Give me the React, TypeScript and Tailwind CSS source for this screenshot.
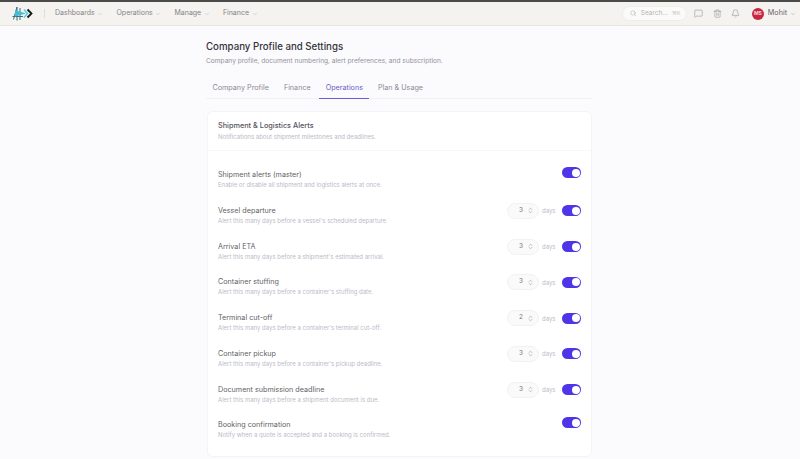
import { ChevronDown, Search, MessageSquare, Trash2, Bell, ChevronsUpDown } from "lucide-react";

const rows: { t: string; d: string; n?: number }[] = [
  { t: "Shipment alerts (master)", d: "Enable or disable all shipment and logistics alerts at once." },
  { t: "Vessel departure", d: "Alert this many days before a vessel's scheduled departure.", n: 3 },
  { t: "Arrival ETA", d: "Alert this many days before a shipment's estimated arrival.", n: 3 },
  { t: "Container stuffing", d: "Alert this many days before a container's stuffing date.", n: 3 },
  { t: "Terminal cut-off", d: "Alert this many days before a container's terminal cut-off.", n: 2 },
  { t: "Container pickup", d: "Alert this many days before a container's pickup deadline.", n: 3 },
  { t: "Document submission deadline", d: "Alert this many days before a shipment document is due.", n: 3 },
  { t: "Booking confirmation", d: "Notify when a quote is accepted and a booking is confirmed." },
];

function Toggle() {
  return (
    <div className="w-[19.500px] h-[11px] rounded-full bg-[#4f35e8] flex items-center justify-end pr-[1.500px]">
      <div className="w-[8px] h-[8px] rounded-full bg-white" />
    </div>
  );
}

function Logo() {
  return (
    <svg width="22" height="15" viewBox="0 0 22 15" fill="none">
      <path d="M1.500 13.500 L5 1 M5 1 L5 14.500 M8 2 L8 14 M0.500 10.500 H11" stroke="#3f6f78" strokeWidth="1" />
      <path d="M3 4 L14 7.500 L3 10.500 Z" fill="#3fc0d4" />
      <path d="M12 3.500 L15.500 7.500 L12 11.500" stroke="#4fd0e0" strokeWidth="1.500" />
      <path d="M15.500 3.500 L19.500 7.500 L15.500 11.500" stroke="#14151a" strokeWidth="1.800" />
    </svg>
  );
}

export default function App() {
  return (
    <div className="w-[800px] h-[459px] overflow-hidden bg-[#fbfbfd] font-['Inter',sans-serif] flex flex-col">
      <div className="h-[2px] bg-[#4a4a48] shrink-0" />
      <header className="h-[24px] shrink-0 bg-[#f5f3ef] border-b border-[#e8e6e1] flex items-center pl-[12px] pr-[4px]">
        <Logo />
        <div className="w-px h-[9px] bg-[#e0ddd8] ml-[10px] mr-[10px]" />
        <nav className="flex items-center gap-[13.200px] text-[7px] text-[#85838a]">
          {["Dashboards", "Operations", "Manage", "Finance"].map((n) => (
            <div key={n} className="flex items-center gap-[2.500px]">
              <span>{n}</span>
              <ChevronDown size={6} strokeWidth={1.500} className="text-[#a5a3a6]" />
            </div>
          ))}
        </nav>
        <div className="ml-auto flex items-center">
          <div className="w-[65px] h-[15px] rounded-full bg-[#fafaf8] border border-[#efede9] flex items-center pl-[7px] pr-[6px] text-[6.500px] text-[#b5b3b5]">
            <Search size={6.500} strokeWidth={1.500} className="text-[#98979a]" />
            <span className="ml-[4px]">Search...</span>
            <span className="ml-auto text-[5px] text-[#c5c3c5]">⌘K</span>
          </div>
          <MessageSquare size={9} strokeWidth={1.200} className="ml-[7px] text-[#77767a]" />
          <Trash2 size={9} strokeWidth={1.200} className="ml-[10px] text-[#77767a]" />
          <Bell size={9} strokeWidth={1.200} className="ml-[8.500px] text-[#77767a]" />
          <div className="ml-[12px] w-[12px] h-[12px] rounded-full bg-[#c8283f] flex items-center justify-center text-[5px] font-bold text-[#f5d5da]">
            MS
          </div>
          <span className="ml-[4px] text-[7.200px] text-[#66656a]">Mohit</span>
          <ChevronDown size={6} strokeWidth={1.500} className="ml-[3px] text-[#8f8e92]" />
        </div>
      </header>
      <main className="w-[386px] ml-[206px] pt-[14px]">
        <h1 className="text-[9.700px] leading-[14px] font-medium text-[#33333a]">Company Profile and Settings</h1>
        <p className="mt-[2px] text-[6.600px] leading-[10px] text-[#92929c]">
          Company profile, document numbering, alert preferences, and subscription.
        </p>
        <div className="mt-[14px] h-[19px] flex border-b border-[#f2f2f6] text-[7.200px] text-[#8a8a94]">
          <div className="px-[6.500px] pt-[3px]">Company Profile</div>
          <div className="ml-[2px] px-[6.500px] pt-[3px]">Finance</div>
          <div className="ml-[2px] px-[6.500px] pt-[3px] h-[19px] border-b-[1px] border-[#6a5ad8] text-[#6a5cc8]">Operations</div>
          <div className="ml-[2px] px-[6.500px] pt-[3px]">Plan &amp; Usage</div>
        </div>
        <section className="mt-[12px] ml-[1px] bg-white rounded-[6px] border border-[#f4f4f7] h-[346px]">
          <div className="h-[39px] border-b border-[#f8f8fb] pl-[10px] pt-[9px]">
            <div className="text-[7.300px] leading-[10px] font-medium text-[#55555c]">Shipment &amp; Logistics Alerts</div>
            <div className="mt-[0.500px] text-[6.050px] leading-[9px] text-[#bbbbc5]">Notifications about shipment milestones and deadlines.</div>
          </div>
          <div className="mt-[16px] pl-[10px] pr-[10px]">
            {rows.map((r) => (
              <div key={r.t} className="h-[35.750px] flex items-start justify-between">
                <div className="pt-[3px]">
                  <div className="text-[7.200px] leading-[9px] text-[#5f5f66]">{r.t}</div>
                  <div className="mt-[2px] text-[6px] leading-[8px] text-[#bbbbc8]">{r.d}</div>
                </div>
                <div className="flex items-center">
                  {r.n !== undefined && (
                    <>
                      <div className="w-[32px] h-[16px] rounded-full bg-[#fafafb] border border-[#f2f2f5] flex items-center justify-end pr-[4.500px] text-[6.500px] text-[#77777f]">
                        <span>{r.n}</span>
                        <ChevronsUpDown size={7} strokeWidth={1.500} className="ml-[3.500px] text-[#77777f]" />
                      </div>
                      <span className="ml-[3px] mr-[6px] text-[6px] text-[#bbbbc5]">days</span>
                    </>
                  )}
                  <Toggle />
                </div>
              </div>
            ))}
          </div>
        </section>
      </main>
    </div>
  );
}
